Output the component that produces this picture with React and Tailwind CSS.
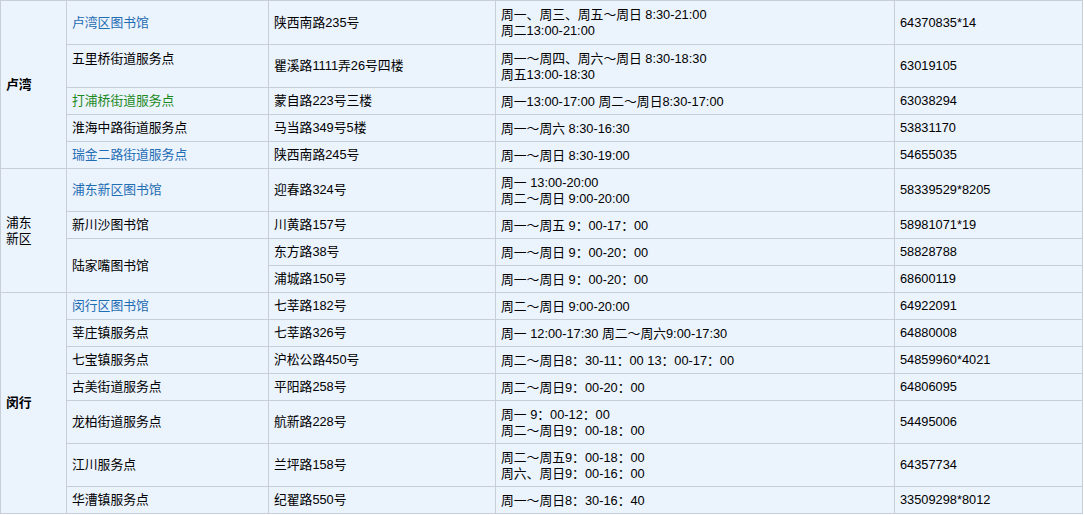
import React from "react";

const BLUE = "text-[#1f6db3]";
const GREEN = "text-[#1d8a1d]";

const rows = [
  { d: { t: "卢湾", span: 5, bold: true }, name: "卢湾区图书馆", c: BLUE, addr: "陕西南路235号", hours: ["周一、周三、周五～周日 8:30-21:00", "周二13:00-21:00"], tel: "64370835*14", h: "h-[43px]" },
  { name: "五里桥街道服务点", top: true, addr: "瞿溪路1111弄26号四楼", hours: ["周一～周四、周六～周日 8:30-18:30", "周五13:00-18:30"], tel: "63019105", h: "h-[42px]" },
  { name: "打浦桥街道服务点", c: GREEN, addr: "蒙自路223号三楼", hours: ["周一13:00-17:00 周二～周日8:30-17:00"], tel: "63038294", h: "h-[26px]" },
  { name: "淮海中路街道服务点", addr: "马当路349号5楼", hours: ["周一～周六 8:30-16:30"], tel: "53831170", h: "h-[26px]" },
  { name: "瑞金二路街道服务点", c: BLUE, addr: "陕西南路245号", hours: ["周一～周日 8:30-19:00"], tel: "54655035", h: "h-[26px]" },
  { d: { t: ["浦东", "新区"], span: 4 }, name: "浦东新区图书馆", c: BLUE, addr: "迎春路324号", hours: ["周一 13:00-20:00", "周二～周日 9:00-20:00"], tel: "58339529*8205", h: "h-[42px]" },
  { name: "新川沙图书馆", addr: "川黄路157号", hours: ["周一～周五 9：00-17：00"], tel: "58981071*19", h: "h-[26px]" },
  { name: "陆家嘴图书馆", nspan: 2, addr: "东方路38号", hours: ["周一～周日 9：00-20：00"], tel: "58828788", h: "h-[26px]" },
  { skipName: true, addr: "浦城路150号", hours: ["周一～周日 9：00-20：00"], tel: "68600119", h: "h-[26px]" },
  { d: { t: "闵行", span: 7, bold: true }, name: "闵行区图书馆", c: BLUE, addr: "七莘路182号", hours: ["周二～周日 9:00-20:00"], tel: "64922091", h: "h-[26px]" },
  { name: "莘庄镇服务点", addr: "七莘路326号", hours: ["周一 12:00-17:30 周二～周六9:00-17:30"], tel: "64880008", h: "h-[26px]" },
  { name: "七宝镇服务点", addr: "沪松公路450号", hours: ["周二～周日8：30-11：00 13：00-17：00"], tel: "54859960*4021", h: "h-[26px]" },
  { name: "古美街道服务点", addr: "平阳路258号", hours: ["周二～周日9：00-20：00"], tel: "64806095", h: "h-[26px]" },
  { name: "龙柏街道服务点", addr: "航新路228号", hours: ["周一 9：00-12：00", "周二～周日9：00-18：00"], tel: "54495006", h: "h-[42px]" },
  { name: "江川服务点", addr: "兰坪路158号", hours: ["周二～周五9：00-18：00", "周六、周日9：00-16：00"], tel: "64357734", h: "h-[42px]" },
  { name: "华漕镇服务点", addr: "纪翟路550号", hours: ["周一～周日8：30-16：40"], tel: "33509298*8012", h: "h-[26px]" },
];

const td = "bg-[#ebf3fd] px-[5px] py-0 align-middle";

export default function App() {
  return (
    <div
      className="w-[1084px] h-[515px] bg-white overflow-hidden text-[12.8px] leading-[16px] text-black"
      style={{ fontFamily: '"Liberation Sans", "Noto Sans CJK SC", sans-serif' }}
    >
      <table className="table-fixed border-separate border-spacing-[1px] bg-[#c8ced7] w-[1083px]">
        <colgroup>
          <col className="w-[65px]" />
          <col className="w-[201px]" />
          <col className="w-[226px]" />
          <col className="w-[398px]" />
          <col className="w-[187px]" />
        </colgroup>
        <tbody>
          {rows.map((r, i) => (
            <tr key={i} className={r.h}>
              {r.d && (
                <td rowSpan={r.d.span} className={`${td} ${r.d.bold ? "font-bold" : ""}`}>
                  {Array.isArray(r.d.t) ? r.d.t.map((x, k) => <div key={k}>{x}</div>) : r.d.t}
                </td>
              )}
              {!r.skipName && (
                <td
                  rowSpan={r.nspan || 1}
                  className={`${td} ${r.c || ""} ${r.top ? "!align-top pt-[6px]" : ""}`}
                >
                  {r.name}
                </td>
              )}
              <td className={td}>{r.addr}</td>
              <td className={`${td} pt-px`}>
                {r.hours.map((x, k) => (
                  <div key={k} className="whitespace-nowrap">{x}</div>
                ))}
              </td>
              <td className={td}>{r.tel}</td>
            </tr>
          ))}
        </tbody>
      </table>
    </div>
  );
}
